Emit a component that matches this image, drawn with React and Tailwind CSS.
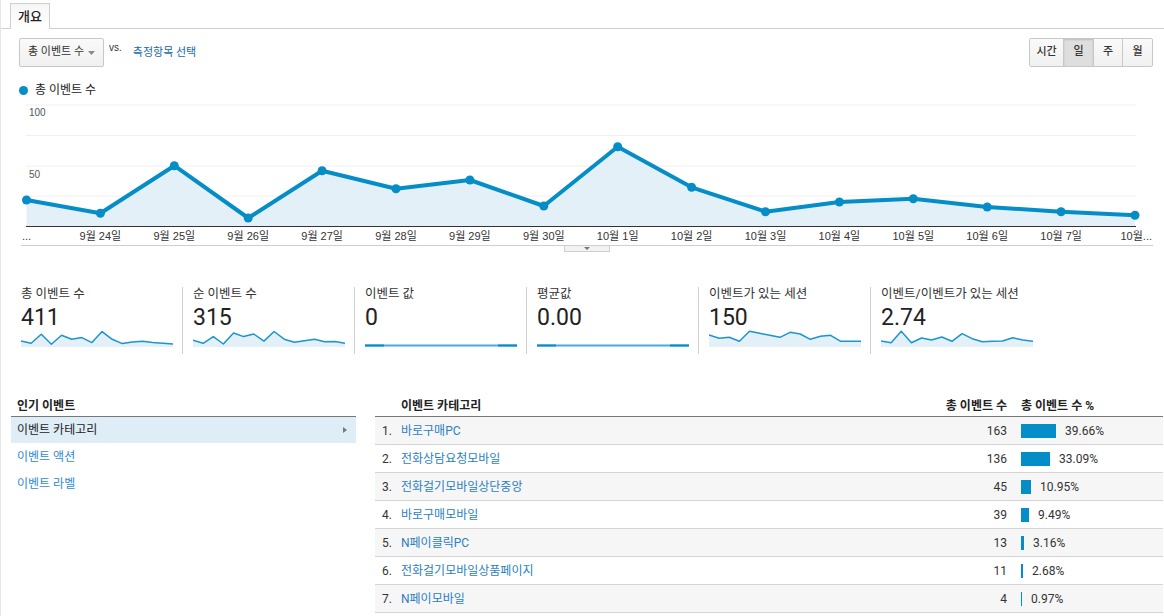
import React from 'react';

const chartY = [200, 213.3, 165.7, 218, 170.7, 188.7, 180, 206, 146.7, 187.3, 211.7, 202, 198.7, 207, 211.7, 215.3];
const dateLabels = ['9월 24일', '9월 25일', '9월 26일', '9월 27일', '9월 28일', '9월 29일', '9월 30일', '10월 1일', '10월 2일', '10월 3일', '10월 4일', '10월 5일', '10월 6일', '10월 7일'];

const metrics = [
    { title: '총 이벤트 수', value: '411', spark: [6, 3.7, 12.7, 2.7, 11.7, 7.7, 9.4, 4.4, 15.4, 7.7, 3.4, 5, 5.7, 4.4, 3.7, 3] },
    { title: '순 이벤트 수', value: '315', spark: [6.7, 3.7, 10.4, 3, 14, 10.4, 13, 5.9, 15.5, 7.8, 4.8, 6.3, 7.8, 5.2, 5.6, 3.7] },
    { title: '이벤트 값', value: '0', flat: true },
    { title: '평균값', value: '0.00', flat: true },
    { title: '이벤트가 있는 세션', value: '150', spark: [12, 8.7, 9.7, 5.7, 15.7, 13.7, 11.7, 9.7, 14.7, 13, 7.7, 10.7, 11.7, 5.7, 5.7, 5.7] },
    { title: '이벤트/이벤트가 있는 세션', value: '2.74', spark: [6, 4.3, 15.7, 4.3, 9, 7, 10, 5.7, 13.3, 8.3, 5.3, 5.7, 6, 9.3, 7, 5.7] },
];

const rows = [
    { name: '바로구매PC', count: 163, pct: 39.66 },
    { name: '전화상담요청모바일', count: 136, pct: 33.09 },
    { name: '전화걸기모바일상단중앙', count: 45, pct: 10.95 },
    { name: '바로구매모바일', count: 39, pct: 9.49 },
    { name: 'N페이클릭PC', count: 13, pct: 3.16 },
    { name: '전화걸기모바일상품페이지', count: 11, pct: 2.68 },
    { name: 'N페이모바일', count: 4, pct: 0.97 },
];

function MainChart() {
    const xs = chartY.map((_, i) => 25.5 + i * 73.9);
    const line = xs.map((x, i) => `${x},${chartY[i]}`).join(' ');
    const area = `25.5,226.5 ${line} ${xs[xs.length - 1]},226.5`;

    return (
        <svg width="1164" height="160" viewBox="0 97 1164 160" className="block">
            {[105, 135.5, 166, 196].map(y => (
                <line key={y} x1="25" x2="1135" y1={y} y2={y} stroke="#f0f0f0" strokeWidth="1" />
            ))}
            <text x="28" y="116" fontSize="10" fill="#555" fontFamily="Liberation Sans, sans-serif">100</text>
            <text x="28" y="178" fontSize="10" fill="#555" fontFamily="Liberation Sans, sans-serif">50</text>
            <polygon points={area} fill="#e3f0f8" />
            <polyline points={line} fill="none" stroke="#058dc7" strokeWidth="4" strokeLinejoin="round" />
            {xs.map((x, i) => (
                <circle key={i} cx={x} cy={chartY[i]} r="4.5" fill="#058dc7" />
            ))}
            <line x1="25" x2="1135" y1="226.5" y2="226.5" stroke="#333" strokeWidth="1" />

            {/* x axis labels */}
            <text x="21" y="240" fontSize="11" fill="#333" fontFamily="Liberation Sans, 'Noto Sans CJK KR', sans-serif">...</text>
            {dateLabels.map((d, i) => (
                <text key={d} x={xs[i + 1]} y="240" fontSize="11" fill="#333" textAnchor="middle" fontFamily="Liberation Sans, 'Noto Sans CJK KR', sans-serif">{d}</text>
            ))}
            <text x="1151" y="240" fontSize="11" fill="#333" textAnchor="end" fontFamily="Liberation Sans, 'Noto Sans CJK KR', sans-serif">10월...</text>

            {/* bottom edge + scroll tab */}
            <line x1="20" x2="1152" y1="245.5" y2="245.5" stroke="#cfcfcf" strokeWidth="1" />
            <rect x="563.5" y="245.5" width="45" height="6" fill="#f2f2f2" stroke="#cfcfcf" strokeWidth="1" />
            <polygon points="583,247 589,247 586,250" fill="#777" />
        </svg>
    );
}

function Sparkline({ data, flat }) {
    if (flat) {
        return (
            <svg width="152" height="17" className="block">
                <line x1="0" x2="152" y1="15.5" y2="15.5" stroke="#4aa9db" strokeWidth="2" />
                <line x1="0" x2="19" y1="15.5" y2="15.5" stroke="#058dc7" strokeWidth="2" />
                <line x1="133" x2="152" y1="15.5" y2="15.5" stroke="#058dc7" strokeWidth="2" />
            </svg>
        );
    }
    const pts = data.map((h, i) => `${(i * 152) / 15},${17 - h}`).join(' ');
    return (
        <svg width="152" height="17" className="block">
            <polygon points={`0,17 ${pts} 152,17`} fill="#e3f0f8" />
            <polyline points={pts} fill="none" stroke="#1a95d0" strokeWidth="1.5" strokeLinejoin="round" />
        </svg>
    );
}

export default function App() {
    return (
        <div className="relative w-[1164px] h-[616px] overflow-hidden bg-white border-l border-[#e6e6e6] font-[Roboto,'Noto_Sans_CJK_KR',sans-serif] text-[#333]">
            {/* Tab */}
            <div className="h-[29px] border-b border-[#cfcfcf] pl-[9px] pt-[3px]">
                <div className="h-[26px] w-[40px] border border-b-0 border-[#cfcfcf] bg-linear-to-b from-[#f6f6f6] to-white flex items-center justify-center text-[13px] font-medium text-[#222]">
                    개요
                </div>
            </div>

            {/* Controls */}
            <div className="mt-[9px] flex items-start justify-between pl-[18px] pr-[11px]">
                <div className="flex items-start">
                    <div className="h-[29px] w-[85px] border border-[#c8c8c8] rounded-[2px] bg-linear-to-b from-[#fafafa] to-[#f0f0f0] flex items-center justify-between pl-[8px] pr-[8px] text-[11px] text-[#333]">
                        <span>총 이벤트 수</span>
                        <svg width="7" height="4"><polygon points="0,0 7,0 3.5,4" fill="#888" /></svg>
                    </div>
                    <span className="ml-[5px] mt-[4px] text-[10px] leading-[12px] text-[#333] font-['Liberation_Sans',sans-serif]">vs.</span>
                    <span className="ml-[11px] mt-[8px] text-[11px] leading-[14px] text-[#1a6aa8]">측정항목 선택</span>
                </div>
                <div className="flex h-[29px] border border-[#c8c8c8] rounded-[2px] overflow-hidden text-[11px] font-medium text-[#333]">
                    <div className="w-[33px] flex items-center justify-center bg-linear-to-b from-[#fafafa] to-[#f0f0f0]">시간</div>
                    <div className="w-[30px] flex items-center justify-center border-l border-[#c8c8c8] bg-[#dedede] shadow-[inset_0_1px_2px_rgba(0,0,0,0.15)]">일</div>
                    <div className="w-[29px] flex items-center justify-center border-l border-[#c8c8c8] bg-linear-to-b from-[#fafafa] to-[#f0f0f0]">주</div>
                    <div className="w-[30px] flex items-center justify-center border-l border-[#c8c8c8] bg-linear-to-b from-[#fafafa] to-[#f0f0f0]">월</div>
                </div>
            </div>

            {/* Legend */}
            <div className="mt-[15px] flex items-center h-[16px] pl-[18px]">
                <span className="w-[9px] h-[9px] rounded-full bg-[#058dc7]" />
                <span className="ml-[7px] text-[12px] text-[#222]">총 이벤트 수</span>
            </div>

            <div className="-mt-px">
                <MainChart />
            </div>

            {/* Metric cards */}
            <div className="mt-[30px] flex pl-[20px]">
                {metrics.map((m, i) => (
                    <div
                        key={m.title}
                        className={i === 0 ? 'w-[161px] h-[67px]' : 'w-[172px] h-[67px] border-l border-[#cfcfcf] pl-[10px]'}
                    >
                        <div className="text-[12.5px] leading-[14px] text-[#333] whitespace-nowrap">{m.title}</div>
                        <div className="mt-[4px] text-[23px] leading-[25px] text-[#222]">{m.value}</div>
                        <Sparkline data={m.spark} flat={m.flat} />
                    </div>
                ))}
            </div>

            {/* Bottom tables */}
            <div className="mt-[42px] flex text-[12px]">
                <div className="ml-[10px] w-[345px]">
                    <div className="h-[21px] border-b border-[#777] flex items-center px-[6px] font-bold text-[#222]">인기 이벤트</div>
                    <div className="h-[26px] bg-[#deedf6] flex items-center justify-between pl-[6px] pr-[9px] text-[#222]">
                        <span>이벤트 카테고리</span>
                        <svg width="4" height="6"><polygon points="0,0 4,3 0,6" fill="#777" /></svg>
                    </div>
                    <div className="h-[27px] flex items-center pl-[6px] text-[#2f8bd0]">이벤트 액션</div>
                    <div className="h-[27px] flex items-center pl-[6px] text-[#2f8bd0]">이벤트 라벨</div>
                </div>

                <div className="ml-[19px] w-[788px]">
                    <div className="h-[21px] border-b border-[#777] flex items-center font-bold text-[#222]">
                        <div className="pl-[26px] flex-1">이벤트 카테고리</div>
                        <div className="w-[100px] text-right">총 이벤트 수</div>
                        <div className="w-[156px] pl-[14px]">총 이벤트 수 %</div>
                    </div>
                    {rows.map((r, i) => (
                        <div
                            key={r.name}
                            className={`h-[28px] border-b border-[#d4d4d4] flex items-center ${i % 2 === 0 ? 'bg-[#f6f6f6]' : 'bg-white'}`}
                        >
                            <div className="w-[26px] pl-[7px] text-[#333]">{i + 1}.</div>
                            <div className="flex-1 text-[#2a7fc2]">{r.name}</div>
                            <div className="w-[100px] text-right text-[#333]">{r.count}</div>
                            <div className="w-[156px] pl-[14px] flex items-center">
                                <div className="h-[14px] bg-[#058dc7]" style={{ width: Math.max(1, Math.round(r.pct * 0.88)) }} />
                                <span className="ml-[9px] text-[#333]">{r.pct.toFixed(2)}%</span>
                            </div>
                        </div>
                    ))}
                </div>
            </div>
        </div>
    );
}
